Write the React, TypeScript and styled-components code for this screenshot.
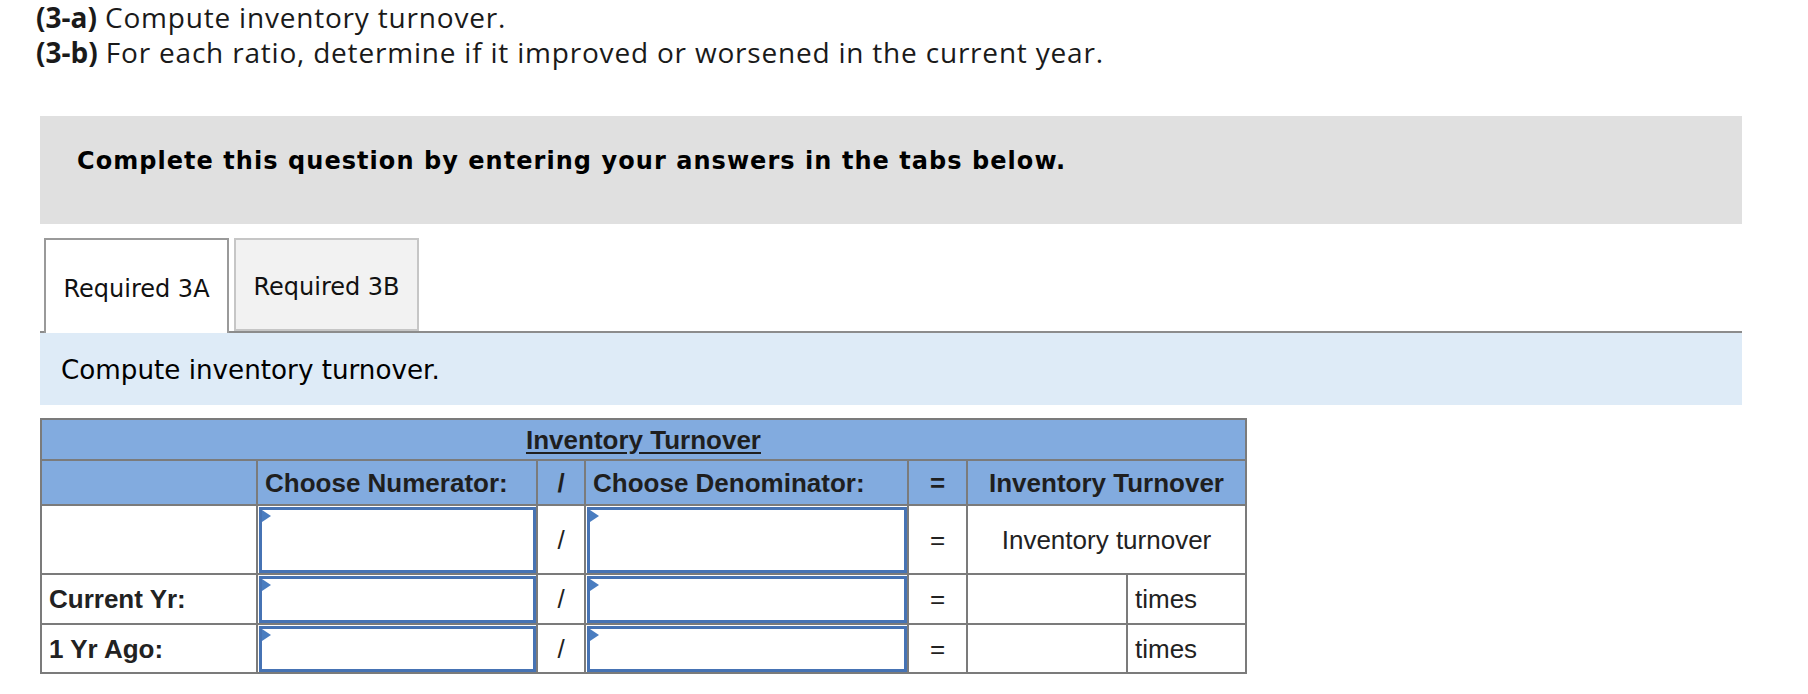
import React from "react";
import styled, { createGlobalStyle } from "styled-components";

const GlobalStyle = createGlobalStyle`
  body {
    margin: 0;
    background: #fff;
    color: #000;
  }
`;

const Page = styled.div`
  width: 1808px;
  padding: 0 0 20px 0;
`;

const Prompt = styled.div`
  padding-left: 36px;
  font-family: "Open Sans", Lato, sans-serif;
  font-size: 28px;
  line-height: 35px;
  letter-spacing: 0.8px;
  color: #1a1a1a;
`;

const PromptLabel = styled.b`
  font-weight: 700;
  letter-spacing: 0;
`;

const InstructionBox = styled.div`
  margin: 46px 0 0 40px;
  width: 1702px;
  height: 108px;
  box-sizing: border-box;
  padding: 29px 0 0 37px;
  background: #e0e0e0;
  font-family: "DejaVu Sans", Verdana, sans-serif;
  font-weight: 700;
  font-size: 24px;
  letter-spacing: 1.05px;
  line-height: 32px;
  color: #000;
`;

const TabBar = styled.div`
  margin: 14px 0 0 40px;
  width: 1702px;
  display: flex;
  gap: 5px;
  padding-left: 4px;
  box-sizing: border-box;
  border-bottom: 2px solid #8c8c8c;
`;

const Tab = styled.div<{ $active?: boolean }>`
  width: 185px;
  box-sizing: border-box;
  display: flex;
  align-items: center;
  justify-content: center;
  padding-top: 5px;
  font-family: "DejaVu Sans", Verdana, sans-serif;
  font-size: 24px;
  color: #111;
  background: ${(p) => (p.$active ? "#fff" : "#f2f2f2")};
  border: 2px solid ${(p) => (p.$active ? "#9a9a9a" : "#c6c6c6")};
  border-bottom: ${(p) => (p.$active ? "none" : "2px solid #c6c6c6")};
  margin-bottom: ${(p) => (p.$active ? "-2px" : "0")};
  height: ${(p) => (p.$active ? "95px" : "93px")};
`;

const TaskPanel = styled.div`
  margin-left: 40px;
  width: 1702px;
  height: 72px;
  box-sizing: border-box;
  padding: 2px 0 0 21px;
  display: flex;
  align-items: center;
  background: #deebf7;
  font-family: "DejaVu Sans", Verdana, sans-serif;
  font-size: 26.2px;
  color: #000;
`;

const Table = styled.table`
  margin: 13px 0 0 40px;
  width: 1205px;
  table-layout: fixed;
  border-collapse: collapse;
  border: 2px solid #7b7b7b;
  font-family: "Liberation Sans", Arial, sans-serif;
  font-size: 26px;
  color: #222;
`;

const Row = styled.tr<{ $h: number }>`
  height: ${(p) => p.$h}px;
`;

const HeadCell = styled.th<{ $align?: string }>`
  background: #82abdf;
  border: 2px solid #7b7b7b;
  font-weight: 700;
  padding: 0 7px;
  line-height: 30px;
  text-align: ${(p) => p.$align ?? "center"};
  color: #1f1f1f;
`;

const Title = styled.span`
  text-decoration: underline;
  text-underline-offset: 3px;
`;

const Cell = styled.td<{ $align?: string; $bold?: boolean }>`
  border: 2px solid #7b7b7b;
  background: #fff;
  padding: 0 7px;
  line-height: 30px;
  text-align: ${(p) => p.$align ?? "center"};
  font-weight: ${(p) => (p.$bold ? 700 : 400)};
`;

const InputCell = styled.td`
  border: 2px solid #7b7b7b;
  padding: 1px 0 0 1px;
  background: #fff;
  vertical-align: bottom;
`;

const Picker = styled.div<{ $h: number }>`
  position: relative;
  height: ${(p) => p.$h}px;
  box-sizing: border-box;
  border: 3px solid #4673b4;
  background: #fff;

  &::before {
    content: "";
    position: absolute;
    left: 0;
    top: 0;
    border-top: 6px solid transparent;
    border-bottom: 6px solid transparent;
    border-left: 9px solid #4a7dc0;
  }
`;

const rows = [
  { label: "Current Yr:", h: 50 },
  { label: "1 Yr Ago:", h: 49 },
];

export default function App() {
  return (
    <Page>
      <GlobalStyle />
      <Prompt>
        <div>
          <PromptLabel>(3-a)</PromptLabel> Compute inventory turnover.
        </div>
        <div>
          <PromptLabel>(3-b)</PromptLabel> For each ratio, determine if it
          improved or worsened in the current year.
        </div>
      </Prompt>

      <InstructionBox>
        Complete this question by entering your answers in the tabs below.
      </InstructionBox>

      <TabBar>
        <Tab $active>Required 3A</Tab>
        <Tab>Required 3B</Tab>
      </TabBar>

      <TaskPanel>Compute inventory turnover.</TaskPanel>

      <Table>
        <colgroup>
          <col style={{ width: 216 }} />
          <col style={{ width: 280 }} />
          <col style={{ width: 48 }} />
          <col style={{ width: 323 }} />
          <col style={{ width: 59 }} />
          <col style={{ width: 160 }} />
          <col style={{ width: 119 }} />
        </colgroup>
        <thead>
          <Row $h={41}>
            <HeadCell colSpan={7}>
              <Title>Inventory Turnover</Title>
            </HeadCell>
          </Row>
          <Row $h={45}>
            <HeadCell />
            <HeadCell $align="left">Choose Numerator:</HeadCell>
            <HeadCell>/</HeadCell>
            <HeadCell $align="left">Choose Denominator:</HeadCell>
            <HeadCell>=</HeadCell>
            <HeadCell colSpan={2}>Inventory Turnover</HeadCell>
          </Row>
        </thead>
        <tbody>
          <Row $h={69}>
            <Cell />
            <InputCell>
              <Picker $h={66} />
            </InputCell>
            <Cell>/</Cell>
            <InputCell>
              <Picker $h={66} />
            </InputCell>
            <Cell>=</Cell>
            <Cell colSpan={2}>Inventory turnover</Cell>
          </Row>
          {rows.map((r) => (
            <Row key={r.label} $h={r.h}>
              <Cell $align="left" $bold>
                {r.label}
              </Cell>
              <InputCell>
                <Picker $h={r.h - 3} />
              </InputCell>
              <Cell>/</Cell>
              <InputCell>
                <Picker $h={r.h - 3} />
              </InputCell>
              <Cell>=</Cell>
              <Cell />
              <Cell $align="left">times</Cell>
            </Row>
          ))}
        </tbody>
      </Table>
    </Page>
  );
}
